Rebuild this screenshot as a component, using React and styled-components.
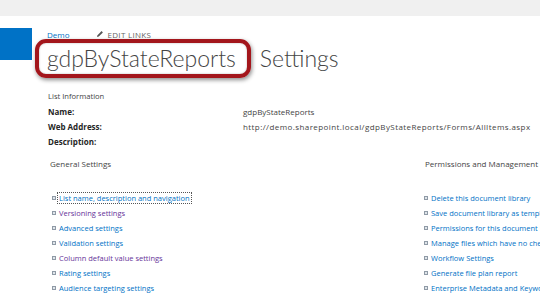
import React from 'react'
import styled, { createGlobalStyle } from 'styled-components'

const color = {
  bar: '#f0f0f0',
  brand: '#0072c6',
  link: '#0072c6',
  visited: '#663399',
  text: '#444444',
  label: '#262626',
  ring: '#a3161c',
}

const GlobalStyle = createGlobalStyle`
  html, body {
    margin: 0;
    padding: 0;
    background: #ffffff;
    width: 540px;
    height: 296px;
    overflow: hidden;
    font-family: "Open Sans", "Liberation Sans", sans-serif;
    color: ${color.text};
  }
`

const Page = styled.div`
  width: 540px;
  height: 296px;
  overflow: hidden;
`

const TopBar = styled.div`
  height: 16px;
  background: ${color.bar};
`

const Header = styled.div`
  display: flex;
  align-items: flex-start;
  padding-top: 12px;
`

const Brand = styled.div`
  width: 32px;
  height: 32px;
  background: ${color.brand};
  flex-shrink: 0;
`

const TitleBlock = styled.div`
  display: flex;
  flex-direction: column;
  margin-left: 14px;
`

const Crumbs = styled.div`
  display: flex;
  align-items: center;
  gap: 26px;
  height: 12px;
  margin-left: 1px;
  font-size: 8px;
`

const CrumbLink = styled.span`
  color: ${color.link};
`

const EditLinks = styled.span`
  display: flex;
  align-items: center;
  gap: 4px;
  color: #666;
  letter-spacing: 0.3px;
`

const TitleRow = styled.div`
  display: flex;
  align-items: center;
  margin-left: -11px;
  margin-top: -1px;
`

const Ring = styled.div`
  border: 4px solid ${color.ring};
  border-radius: 11px;
  padding: 0 11px 0 8px;
  box-shadow: 1px 2px 4px rgba(0, 0, 0, 0.45), inset 0 0 2px rgba(0, 0, 0, 0.3);
`

const Title = styled.h1`
  margin: 0;
  font-family: Lato, "Open Sans", sans-serif;
  font-size: 23px;
  font-weight: 300;
  line-height: 31px;
  color: ${color.text};
`

const TitleSuffix = styled(Title)`
  margin-left: 9px;
`

const Content = styled.div`
  padding-left: 48px;
  padding-top: 11px;
  font-size: 8px;
`

const Caption = styled.div`
  height: 15px;
  line-height: 15px;
  color: ${color.text};
  font-size: 7.6px;
`

const InfoRow = styled.div`
  display: grid;
  grid-template-columns: 195px 1fr;
  height: 15px;
  line-height: 15px;
`

const Label = styled.span`
  font-weight: 700;
  color: ${color.label};
`

const Value = styled.span`
  color: ${color.text};
  letter-spacing: ${p => p.$spread || 0}px;
  white-space: nowrap;
`

const Columns = styled.div`
  display: grid;
  grid-template-columns: 372px 1fr;
  margin-top: 7px;
`

const Section = styled.div`
  display: flex;
  flex-direction: column;
`

const SectionTitle = styled.div`
  height: 15px;
  line-height: 15px;
  padding-left: ${p => p.$indent || 0}px;
  color: ${color.text};
  margin-bottom: 19px;
`

const LinkList = styled.ul`
  list-style: none;
  margin: 0;
  padding: 0 0 0 4px;
`

const LinkItem = styled.li`
  display: flex;
  align-items: center;
  height: 15px;
  white-space: nowrap;
`

const Bullet = styled.span`
  width: 2px;
  height: 2px;
  border: 1px solid #8f9aa6;
  background: #dfe5ea;
  margin-right: 2px;
  flex-shrink: 0;
`

const Link = styled.a`
  color: ${p => (p.$visited ? color.visited : color.link)};
  font-size: 7.5px;
  text-decoration: none;
  outline: ${p => (p.$focus ? '1px dotted #555' : 'none')};
  outline-offset: 0;
  padding: 0 1px;
  line-height: 10px;
`

const general = [
  { text: 'List name, description and navigation', focus: true },
  { text: 'Versioning settings', visited: true },
  { text: 'Advanced settings' },
  { text: 'Validation settings' },
  { text: 'Column default value settings', visited: true },
  { text: 'Rating settings' },
  { text: 'Audience targeting settings' },
]

const permissions = [
  { text: 'Delete this document library' },
  { text: 'Save document library as template' },
  { text: 'Permissions for this document library' },
  { text: 'Manage files which have no checked in version' },
  { text: 'Workflow Settings' },
  { text: 'Generate file plan report' },
  { text: 'Enterprise Metadata and Keywords Settings' },
]

const Pencil = () => (
  <svg width="8" height="8" viewBox="0 0 8 8">
    <path d="M1 7 L1.5 5.2 L5.6 1.1 L6.9 2.4 L2.8 6.5 Z" fill="#555" />
  </svg>
)

function LinkColumn({ items }) {
  return (
    <LinkList>
      {items.map(item => (
        <LinkItem key={item.text}>
          <Bullet />
          <Link href="#" $visited={item.visited} $focus={item.focus}>
            {item.text}
          </Link>
        </LinkItem>
      ))}
    </LinkList>
  )
}

export default function App() {
  return (
    <Page>
      <GlobalStyle />
      <TopBar />
      <Header>
        <Brand />
        <TitleBlock>
          <Crumbs>
            <CrumbLink>Demo</CrumbLink>
            <EditLinks>
              <Pencil />
              EDIT LINKS
            </EditLinks>
          </Crumbs>
          <TitleRow>
            <Ring>
              <Title>gdpByStateReports</Title>
            </Ring>
            <TitleSuffix as="span">Settings</TitleSuffix>
          </TitleRow>
        </TitleBlock>
      </Header>
      <Content>
        <Caption>List Information</Caption>
        <InfoRow>
          <Label>Name:</Label>
          <Value>gdpByStateReports</Value>
        </InfoRow>
        <InfoRow>
          <Label>Web Address:</Label>
          <Value $spread={0.42}>http://demo.sharepoint.local/gdpByStateReports/Forms/AllItems.aspx</Value>
        </InfoRow>
        <InfoRow>
          <Label>Description:</Label>
          <Value />
        </InfoRow>
        <Columns>
          <Section>
            <SectionTitle $indent={2}>General Settings</SectionTitle>
            <LinkColumn items={general} />
          </Section>
          <Section>
            <SectionTitle $indent={5}>Permissions and Management</SectionTitle>
            <LinkColumn items={permissions} />
          </Section>
        </Columns>
      </Content>
    </Page>
  )
}
